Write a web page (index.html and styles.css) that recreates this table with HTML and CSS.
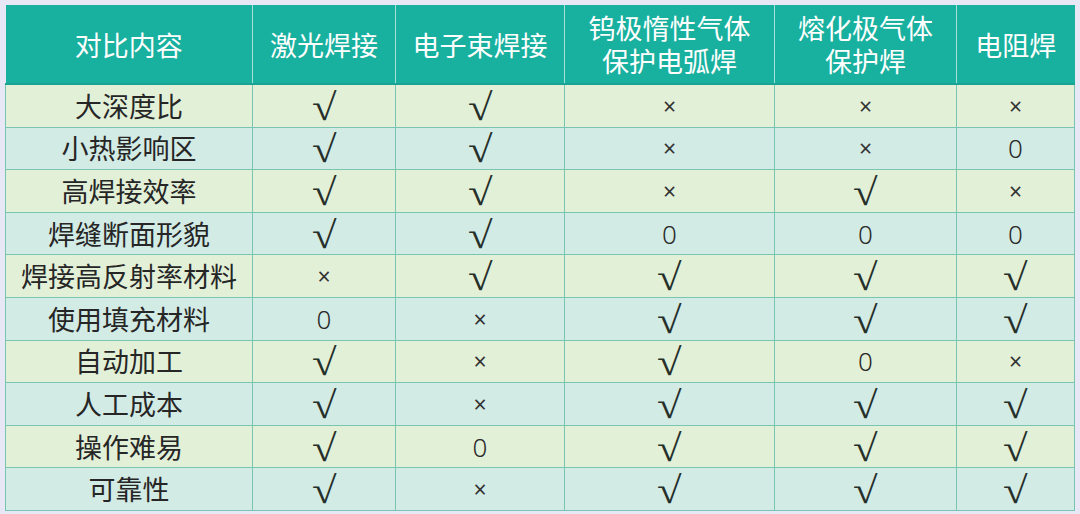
FILE: index.html
```html
<!DOCTYPE html>
<html lang="zh">
<head>
<meta charset="utf-8">
<link rel="stylesheet" href="styles.css">
</head>
<body>
<div class="page">
<table class="cmp">
<colgroup>
<col class="c1"><col class="c2"><col class="c3"><col class="c4"><col class="c5"><col class="c6">
</colgroup>
<thead>
<tr class="head">
<th>对比内容</th><th>激光焊接</th><th>电子束焊接</th><th>钨极惰性气体<br>保护电弧焊</th><th>熔化极气体<br>保护焊</th><th>电阻焊</th>
</tr>
</thead>
<tbody>
<tr class="odd"><td>大深度比</td><td><span class="ck">√</span></td><td><span class="ck">√</span></td><td class="x">×</td><td class="x">×</td><td class="x">×</td></tr>
<tr class="even"><td>小热影响区</td><td><span class="ck">√</span></td><td><span class="ck">√</span></td><td class="x">×</td><td class="x">×</td><td class="z">0</td></tr>
<tr class="odd"><td>高焊接效率</td><td><span class="ck">√</span></td><td><span class="ck">√</span></td><td class="x">×</td><td><span class="ck">√</span></td><td class="x">×</td></tr>
<tr class="even"><td>焊缝断面形貌</td><td><span class="ck">√</span></td><td><span class="ck">√</span></td><td class="z">0</td><td class="z">0</td><td class="z">0</td></tr>
<tr class="odd"><td>焊接高反射率材料</td><td class="x">×</td><td><span class="ck">√</span></td><td><span class="ck">√</span></td><td><span class="ck">√</span></td><td><span class="ck">√</span></td></tr>
<tr class="even"><td>使用填充材料</td><td class="z">0</td><td class="x">×</td><td><span class="ck">√</span></td><td><span class="ck">√</span></td><td><span class="ck">√</span></td></tr>
<tr class="odd"><td>自动加工</td><td><span class="ck">√</span></td><td class="x">×</td><td><span class="ck">√</span></td><td class="z">0</td><td class="x">×</td></tr>
<tr class="even"><td>人工成本</td><td><span class="ck">√</span></td><td class="x">×</td><td><span class="ck">√</span></td><td><span class="ck">√</span></td><td><span class="ck">√</span></td></tr>
<tr class="odd"><td>操作难易</td><td><span class="ck">√</span></td><td class="z">0</td><td><span class="ck">√</span></td><td><span class="ck">√</span></td><td><span class="ck">√</span></td></tr>
<tr class="even"><td>可靠性</td><td><span class="ck">√</span></td><td class="x">×</td><td><span class="ck">√</span></td><td><span class="ck">√</span></td><td><span class="ck">√</span></td></tr>
</tbody>
</table>
</div>
</body>
</html>
```
FILE: styles.css
```css
html, body {
  margin: 0;
  padding: 0;
  background: #e7e7f5;
}
.page {
  padding: 5px 0 0 5px;
  width: 1080px;
  height: 514px;
  box-sizing: border-box;
}
.cmp {
  border-collapse: collapse;
  table-layout: fixed;
  width: 1069px;
  font-family: "Noto Sans CJK SC", "Noto Sans", sans-serif;
}
.c1 { width: 247px; }
.c2 { width: 143px; }
.c3 { width: 169px; }
.c4 { width: 210px; }
.c5 { width: 182px; }
.c6 { width: 118px; }
.head th {
  height: 78px;
  padding: 0;
  background: #18b09e;
  color: #ffffff;
  font-weight: 400;
  font-size: 27px;
  line-height: 33px;
  border-left: 1px solid #a6e0d6;
  border-right: 1px solid #a6e0d6;
  border-bottom: 2px solid #1aa394;
  text-align: center;
  vertical-align: middle;
}
.head th:first-child { border-left: none; }
.head th:last-child { border-right: none; }
td {
  height: 41.6px;
  padding: 0;
  border: 1px solid #78c6b2;
  text-align: center;
  vertical-align: middle;
  font-size: 27px;
  color: #262626;
  line-height: 30px;
}
.odd td { background: #e3f0d8; }
.even td { background: #d3ebe5; }
.ck {
  display: inline-block;
  font-family: "Liberation Serif", serif;
  font-size: 38px;
  line-height: 30px;
  color: #26302b;
  transform: scaleX(1.18);
  position: relative;
  top: 2px;
}
.x {
  font-family: "Noto Sans", sans-serif;
  font-size: 23px;
  color: #333333;
}
.z {
  font-family: "Noto Sans", sans-serif;
  font-size: 26px;
  font-weight: 300;
  color: #2a2a2a;
}
```
